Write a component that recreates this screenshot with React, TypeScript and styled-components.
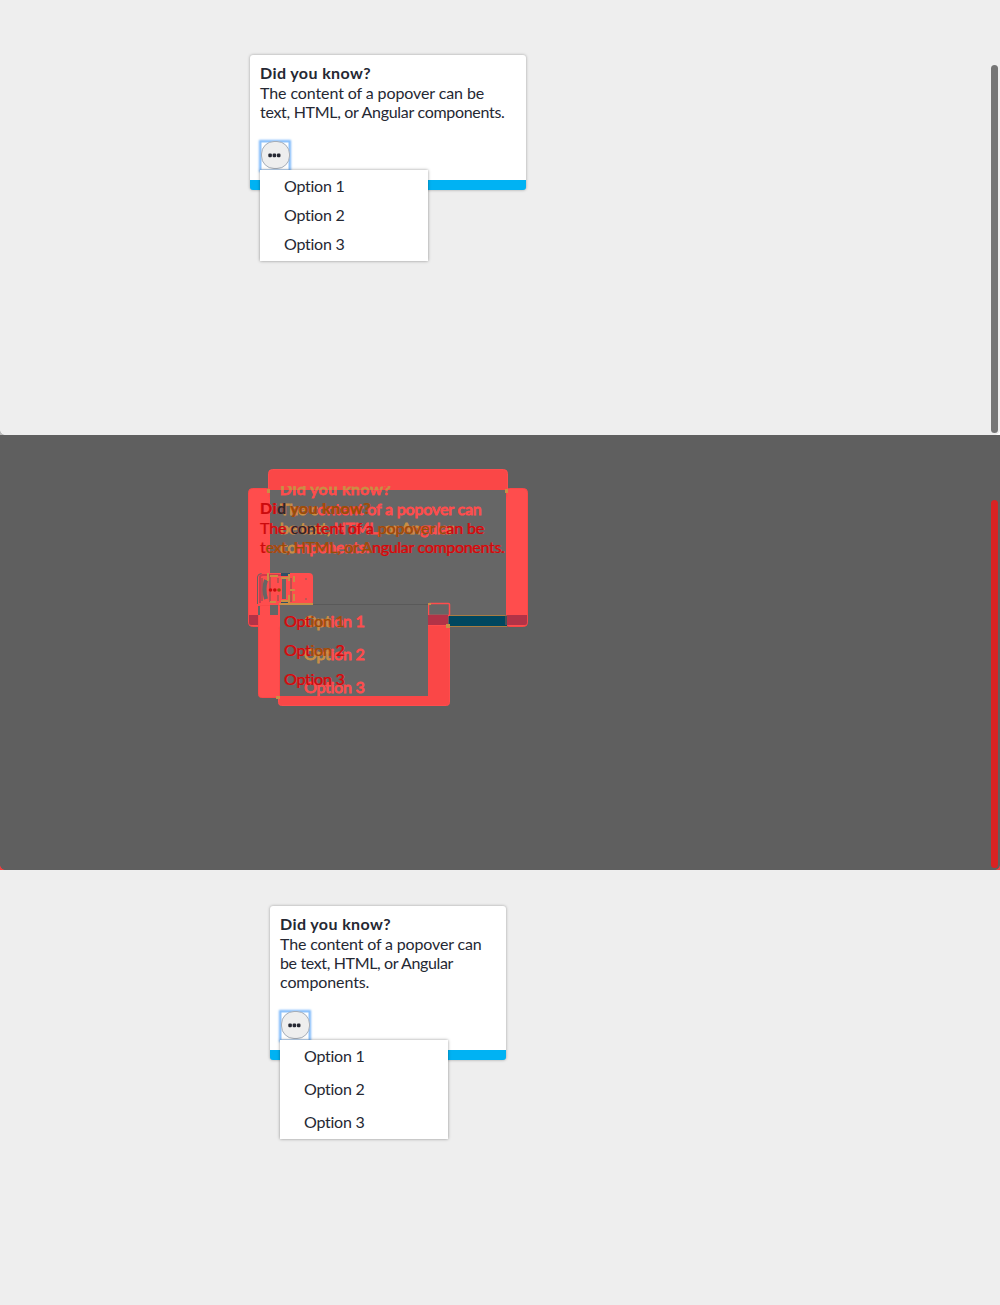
import React from "react";
import styled, { createGlobalStyle } from "styled-components";

const Global = createGlobalStyle`
  * { box-sizing: border-box; }
  body { margin: 0; background: #eee; font-family: Lato, "Noto Sans", sans-serif; font-size: 16px; color: #252833; }
`;

const Page = styled.main`
  display: flex;
  flex-direction: column;
  width: 1000px;
`;

const Panel = styled.section<{ $top?: number; $left?: number }>`
  position: relative;
  display: flex;
  align-items: flex-start;
  height: 435px;
  padding: ${(p) => p.$top ?? 0}px 0 0 ${(p) => p.$left ?? 0}px;
  background: #eee;
  overflow: hidden;
`;

const Scrollbar = styled.div<{ $color: string }>`
  position: absolute;
  right: 2px;
  top: 65px;
  width: 7px;
  height: 368px;
  border-radius: 4px;
  background: ${(p) => p.$color};
`;

const Corner = styled.i<{ $right?: boolean; $color: string }>`
  position: absolute;
  bottom: 0;
  ${(p) => (p.$right ? "right: 0;" : "left: 0;")}
  width: 5px;
  height: 5px;
  background: radial-gradient(circle at ${(p) => (p.$right ? "0 0" : "100% 0")}, transparent 4.5px, ${(p) => p.$color} 5px);
`;

const Popover = styled.article<{ $width: number; $height: number }>`
  position: relative;
  display: flex;
  flex-direction: column;
  align-items: flex-start;
  width: ${(p) => p.$width}px;
  height: ${(p) => p.$height}px;
  padding: 8px 10px 0;
  border-bottom: 10px solid #00b2f3;
  border-radius: 3px;
  background: #fff;
  box-shadow: 0 0 3px rgba(0, 0, 0, 0.35);
`;

const Title = styled.h2`
  margin: 0;
  font-size: 16px;
  line-height: 20px;
  font-weight: 700;
  letter-spacing: 0.4px;
  white-space: nowrap;
`;

const Copy = styled.p`
  margin: 0 0 20px;
  line-height: 19px;
`;

const Line = styled.span<{ $spacing?: number }>`
  display: block;
  white-space: nowrap;
  letter-spacing: ${(p) => p.$spacing ?? 0}px;
`;

const MoreButton = styled.button`
  display: flex;
  align-items: flex-start;
  justify-content: center;
  width: 30px;
  height: 30px;
  padding: 0;
  border: 0;
  background: #fff;
  box-shadow: 0 0 2px 1px #7db9fb, inset 0 0 0 1.5px #8fc3fc;
`;

const Circle = styled.span`
  display: flex;
  align-items: center;
  justify-content: center;
  width: 29px;
  height: 28px;
  padding-right: 1px;
  border: 1px solid #a5adb8;
  border-radius: 13px;
  background: #eee;
`;

const Dots = () => (
  <svg width="13" height="5" viewBox="0 0 13 5" fill="#252833">
    <rect x="0.3" y="0.5" width="3.6" height="3.8" rx="1.2" />
    <rect x="4.6" y="0.5" width="3.6" height="3.8" rx="1.2" />
    <rect x="8.9" y="0.5" width="3.6" height="3.8" rx="1.2" />
  </svg>
);

const Menu = styled.ul<{ $pad: number }>`
  position: absolute;
  left: 10px;
  top: calc(100% - 10px);
  width: 168px;
  margin: 0;
  padding: ${(p) => p.$pad}px 0;
  list-style: none;
  background: #fff;
  box-shadow: 0 0 3px rgba(0, 0, 0, 0.4);
`;

const MenuItem = styled.li<{ $row: number }>`
  height: ${(p) => p.$row}px;
  padding-left: 24px;
  line-height: ${(p) => p.$row - 2}px;
  letter-spacing: -0.25px;
`;

const options = ["Option 1", "Option 2", "Option 3"];

type CardProps = { width: number; height: number; row: number; pad: number; lines: [string, number][] };

function Card({ width, height, row, pad, lines }: CardProps) {
  return (
    <Popover $width={width} $height={height}>
      <Title>Did you know?</Title>
      <Copy>
        {lines.map(([text, spacing]) => (
          <Line key={text} $spacing={spacing}>{text}</Line>
        ))}
      </Copy>
      <MoreButton aria-label="More"><Circle><Dots /></Circle></MoreButton>
      <Menu $pad={pad}>
        {options.map((o) => <MenuItem key={o} $row={row}>{o}</MenuItem>)}
      </Menu>
    </Popover>
  );
}

const RED = "#ff4d4d";
const SOFT = "#fa4747";
const DARK = "#cb0a0d";
const TAN = "#c98f45";
const BROWN = "#945006";
const GREY = "#666";
const MAROON = "#b23347";
const NAVY = "#00475f";

const DiffPanel = styled(Panel)`
  display: grid;
  background: #5f5f5f;
`;

const DiffShapes = styled.svg`
  grid-area: 1 / 1;
  display: block;
`;

const Layer = styled.div<{ $top: number; $left: number }>`
  grid-area: 1 / 1;
  z-index: 1;
  display: flex;
  flex-direction: column;
  align-items: flex-start;
  padding: ${(p) => p.$top}px 0 0 ${(p) => p.$left}px;
`;

const Heavy = styled(Layer)`
  -webkit-text-stroke: 0.9px currentColor;
`;

const Haloed = styled(Layer)`
  -webkit-text-stroke: 0.2px currentColor;
  text-shadow: 0.6px 0 rgba(255, 60, 60, 0.65), -0.6px 0 rgba(255, 60, 60, 0.65);
`;

const Marked = styled(Line)<{ $color: string }>`
  line-height: 19px;
  color: ${(p) => p.$color};
`;

const MarkedTitle = styled(Title)<{ $color: string }>`
  color: ${(p) => p.$color};
`;

const CutTitle = styled(Title)`
  background: linear-gradient(${SOFT} 7px, ${TAN} 7px, ${TAN} 11px, ${RED} 11px);
  background-clip: text;
  -webkit-text-fill-color: transparent;
  -webkit-text-stroke: 0.8px transparent;
`;

const MarkedList = styled.ul<{ $top: number; $row: number }>`
  display: flex;
  flex-direction: column;
  margin: 0;
  padding: ${(p) => p.$top}px 0 0 24px;
  list-style: none;
  color: ${RED};
  letter-spacing: -0.25px;
  line-height: ${(p) => p.$row}px;
`;

const Tint = styled.span<{ $color: string }>`
  color: ${(p) => p.$color};
`;

function Difference() {
  return (
    <DiffPanel>
      <DiffShapes width="1000" height="435" viewBox="0 0 1000 435" fill="none">
        <rect x="248.5" y="53.5" width="22" height="138" rx="4" fill={RED} stroke={SOFT} />
        <rect x="505.5" y="53.5" width="22" height="138" rx="4" fill={RED} stroke={SOFT} />
        <rect x="268.5" y="34.5" width="239" height="30" rx="4" fill={SOFT} stroke={RED} />
        <path d="M249 180H270V190H251Q249 190 249 188ZM506 180H527V188Q527 190 525 190H506Z" fill={MAROON} />
        <rect x="270" y="55" width="236" height="125" fill={GREY} />
        <path d="M449 180.500H507V191H449Z" fill={NAVY} />
        <path d="M449 180.500H507M449 191.500H507" stroke="#a97c42" />
        <path d="M506 180v10" stroke="#8a5a50" />
        <rect x="258.5" y="170.5" width="24" height="92" rx="3" fill={RED} stroke={SOFT} />
        <rect x="278.5" y="190.5" width="171" height="80" rx="3" fill={SOFT} stroke={RED} />
        <rect x="428.5" y="168.5" width="21" height="12" rx="1" fill={GREY} stroke={RED} strokeWidth="1.500" />
        <rect x="428" y="180" width="20" height="10" fill={MAROON} />
        <rect x="257" y="138" width="56" height="32" rx="4" fill={RED} />
        <rect x="270" y="170" width="8" height="10" fill={GREY} />
        <rect x="258" y="171" width="2" height="9" fill={GREY} />
        <rect x="280" y="169" width="148" height="92" fill={GREY} />
        <path d="M281 138h9v3h-9ZM281 167h9v3h-9Z" fill="#304f66" />
        <path d="M280 169.500H428" stroke="#595959" />
        <path d="M260 168V142q0-2 3-2h18" stroke="#d23a4e" strokeWidth="2" />
        <path d="M257.500 169V142q0-3 4-3.500" stroke="#6b6060" />
        <path d="M266 145q-3 9 0 19M284 144v20" stroke={GREY} strokeWidth="4" />
        <path d="M262 143v23M270 141v26M278 143v5M278 160v6M291 143v24" stroke="#7c5552" />
        <path d="M268 138v8M274 141h4M281 143h8M281 166h8M289 139v7M289 160v9M294 141v6M294 159v7M290 155h5M279 169h34M270 141h7M270 167h6" stroke={TAN} strokeWidth="2" />
        <path d="M305 144h2M305 164h2" stroke="#80605f" />
        <path d="M267 54h3v4h-3ZM505 54h3v4h-3ZM276 261h4v3h-4ZM428 168h3v2h-3ZM446 189h4v4h-4Z" fill={TAN} />
        <circle cx="270.500" cy="155" r="1.800" fill={DARK} />
        <circle cx="274.800" cy="155" r="1.800" fill={DARK} />
        <circle cx="279" cy="155" r="1.800" fill={BROWN} />
      </DiffShapes>

      <Heavy $top={44} $left={280}>
        <CutTitle>Did you know?</CutTitle>
        <Marked $color={RED} $spacing={-0.15}><Tint $color={TAN}>The c</Tint>ontent of a popover can</Marked>
        <Marked $color={TAN} $spacing={-0.36}>be text, <Tint $color={RED}>HTML,</Tint> or An<Tint $color={RED}>gula</Tint>r</Marked>
        <Marked $color={TAN} $spacing={-0.1}>co<Tint $color={RED}>mponents.</Tint></Marked>
        <MarkedList $top={48} $row={33}>
          <li><Tint $color={TAN}>Opt</Tint>ion 1</li>
          <li><Tint $color={TAN}>Opt</Tint>ion 2</li>
          <li>Option 3</li>
        </MarkedList>
      </Heavy>

      <Haloed $top={63} $left={260}>
        <MarkedTitle $color={BROWN}><Tint $color={DARK}>Di</Tint><Tint $color="#292a2c">d</Tint> you know?</MarkedTitle>
        <Marked $color={DARK} $spacing={-0.1}>The <Tint $color="#262729">con</Tint>tent of a <Tint $color={BROWN}>popover c</Tint>an be</Marked>
        <Marked $color={DARK} $spacing={-0.3}>t<Tint $color={BROWN}>ext, HTML, or A</Tint>ngular components.</Marked>
        <MarkedList $top={50} $row={29}>
          <Tint as="li" $color={DARK}>Opt<Tint $color={BROWN}>ion 1</Tint></Tint>
          <Tint as="li" $color={DARK}>Opt<Tint $color={BROWN}>ion</Tint> 2</Tint>
          <Tint as="li" $color={DARK}>Option 3</Tint>
        </MarkedList>
      </Haloed>
      <Scrollbar $color="#d92323" />
      <Corner $color="#ef4040" />
      <Corner $color="#ef4040" $right />
    </DiffPanel>
  );
}

export default function App() {
  return (
    <>
      <Global />
      <Page>
        <Panel $top={55} $left={250}>
          <Card width={276} height={135} row={29} pad={2} lines={[["The content of a popover can be", -0.1], ["text, HTML, or Angular components.", -0.3]]} />
          <Scrollbar $color="#757575" />
          <Corner $color="#bbb" />
          <Corner $color="#fff" $right />
        </Panel>
        <Difference />
        <Panel $top={36} $left={270}>
          <Card width={236} height={154} row={33} pad={0} lines={[["The content of a popover can", -0.15], ["be text, HTML, or Angular", -0.36], ["components.", -0.1]]} />
        </Panel>
      </Page>
    </>
  );
}
